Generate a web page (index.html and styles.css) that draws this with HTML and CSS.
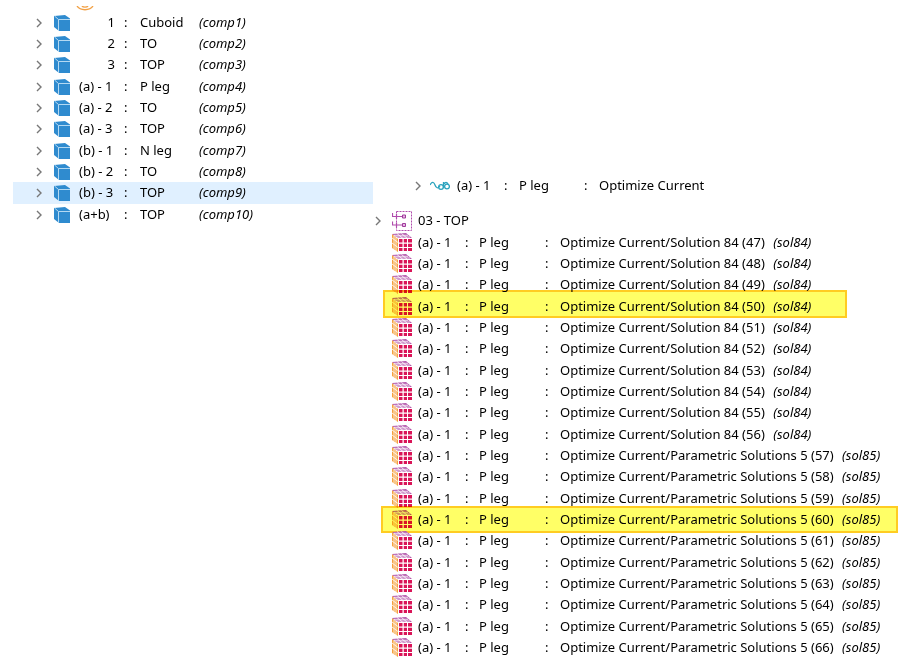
FILE: index.html
```
<!DOCTYPE html>
<html lang="en">
<head>
  <meta charset="UTF-8" />
  <meta name="viewport" content="width=device-width, initial-scale=1.0"/>
  <title>Model Tree</title>
  <link rel="stylesheet" href="styles.css">
</head>
<body>
  <svg class="symbols" aria-hidden="true">
    <symbol id="chevron" viewBox="0 0 8 10">
      <path d="M2 1l4 4-4 4" fill="none" stroke="#777" stroke-width="1.4"/>
    </symbol>
    <symbol id="cube" viewBox="0 0 16 16">
      <path d="M0 1l11-1 5 3.500V16H5L0 12z" fill="#2f8bcf"/>
      <path d="M.5 1L4.500 4.500H16M4.500 4.500V16" fill="none" stroke="#b4d9f2" stroke-width="1"/>
    </symbol>
    <symbol id="study" viewBox="0 0 20 10">
      <path d="M0 4c2-4 4-3 5 0s3 4 5 1M13.500 1v6M14 3c1-2 3-2 4 0" fill="none" stroke="#2ba3bd" stroke-width="1.3"/>
      <circle cx="11" cy="6" r="2.4" fill="none" stroke="#2ba3bd" stroke-width="1.3"/>
      <circle cx="17" cy="5.5" r="2.4" fill="none" stroke="#2ba3bd" stroke-width="1.3"/>
    </symbol>
    <symbol id="group" viewBox="0 0 20 20">
      <path d="M4.500.5h15v19h-15z" fill="none" stroke="#b04cac" stroke-dasharray="2 1"/>
      <path d="M.5 2v3.500H10M.5 10.500V14H10M4.500 3v5M4.500 11.500v5" fill="none" stroke="#b04cac" stroke-width="1.2"/>
      <path d="M10.500 4h3v3h-3zM10.500 12.500h3v3h-3z" fill="#e5b9e3" stroke="#a03c9c"/>
    </symbol>
    <symbol id="solution" viewBox="0 0 20 19">
      <path d="M0 1l6 5v13l-6-4z" fill="#f5a13c"/>
      <path d="M0 1l14-1 6 5H6z" fill="#b45aad"/>
      <path d="M2 2.500v14M4 4v14M0 5l6 4.500M0 10l6 4.500" fill="none" stroke="#fff" stroke-width=".8"/>
      <path d="M2 2.300h14M4 4h14M5 .5l6 5M9.500 .5l6 5" fill="none" stroke="#fff" stroke-width=".8"/>
      <path d="M6 5h14v14H6z" fill="#fff"/>
      <path d="M7 6h4v4H7zm4.500 0h4v4h-4zm4.500 0h4v4h-4zM7 10.500h4v4H7zm4.500 0h4v4h-4zm4.500 0h4v4h-4zM7 15h4v3H7zm4.500 0h4v3h-4zm4.500 0h4v3h-4z" fill="#d91458"/>
      <path d="M11 6v13M15.500 6v13M6 10h14M6 14.500h14" fill="none" stroke="#fff"/>
    </symbol>
  </svg>

  <main class="page">
    <section class="components">
      <svg class="parent-icon" viewBox="0 0 18 5" aria-hidden="true">
        <path d="M1 0c3 5 13 5 16 0M6 0c1 1.500 5 1.500 6 0" fill="none" stroke="#f2a145" stroke-width="1.400"/>
      </svg>
      <ul class="tree" id="components"></ul>
    </section>

    <section class="results">
      <div class="row study">
        <button class="toggle" aria-label="Expand study"><svg><use href="#chevron"/></svg></button>
        <svg class="study-icon"><use href="#study"/></svg>
        <span>(a) - 1</span><span>:</span><span>P leg</span><span>:</span><span>Optimize Current</span>
      </div>
      <div class="row group">
        <button class="toggle" aria-label="Expand group"><svg><use href="#chevron"/></svg></button>
        <svg class="group-icon"><use href="#group"/></svg>
        <span>03 - TOP</span>
      </div>
      <ul class="tree" id="solutions"></ul>
    </section>
  </main>

  <script>
    const components = [
      ['1', 'Cuboid'], ['2', 'TO'], ['3', 'TOP'],
      ['(a) - 1', 'P leg'], ['(a) - 2', 'TO'], ['(a) - 3', 'TOP'],
      ['(b) - 1', 'N leg'], ['(b) - 2', 'TO'], ['(b) - 3', 'TOP'],
      ['(a+b)', 'TOP']
    ];

    document.getElementById('components').innerHTML = components.map(([key, name], i) => `
      <li class="row component ${i === 8 ? 'selected' : ''}">
        <button class="toggle" aria-label="Expand comp${i + 1}"><svg><use href="#chevron"/></svg></button>
        <svg class="cube-icon"><use href="#cube"/></svg>
        <span class="${i < 3 ? 'number' : ''}">${key}</span><span>:</span><span>${name}</span>
        <em>(comp${i + 1})</em>
      </li>`).join('');

    let rows = '';
    for (let n = 47; n <= 66; n++) {
      const first = n <= 56;
      const title = first ? 'Solution 84' : 'Parametric Solutions 5';
      const mark = n === 50 ? 'marked' : n === 60 ? 'marked wide' : '';
      rows += `
      <li class="row solution ${mark}">
        <svg class="solution-icon"><use href="#solution"/></svg>
        <span>(a) - 1</span><span>:</span><span>P leg</span><span>:</span>
        <span>Optimize Current/${title} (${n}) <em>(${first ? 'sol84' : 'sol85'})</em></span>
      </li>`;
    }
    document.getElementById('solutions').innerHTML = rows;
  </script>
</body>
</html>
```
FILE: styles.css
```
body {
  margin: 0;
  background: #fff;
  color: #000;
  font-family: "Noto Sans", "Open Sans", sans-serif;
  font-size: 13px;
  line-height: 21px;
}

.symbols {
  position: absolute;
  width: 0;
  height: 0;
}

.page {
  display: grid;
  grid-template-columns: 360px 1fr;
  padding: 6px 0 0 13px;
}

.tree {
  list-style: none;
  margin: 0;
  padding: 0;
}

.row {
  display: grid;
  align-items: center;
  white-space: nowrap;
}

.tree .row:nth-child(3n) {
  padding-bottom: 1px;
}

.toggle {
  display: flex;
  width: 8px;
  padding: 0;
  border: none;
  background: none;
  cursor: pointer;
}

.toggle svg {
  width: 8px;
  height: 10px;
}

/* components */
.parent-icon {
  display: block;
  width: 18px;
  height: 5px;
  margin: 0 0 1px 63px;
}

.component {
  grid-template-columns: 19px 25px 36px 16px 68px 1fr;
  padding-left: 22px;
}

.component .number {
  text-align: right;
}

.component span:nth-of-type(2),
.component span:nth-of-type(3) {
  padding-left: 9px;
}

.selected {
  background: #e0f0ff;
}

.cube-icon {
  width: 16px;
  height: 16px;
  margin-top: 1px;
}

/* study and solutions */
.results {
  padding-top: 169px;
}

.study {
  grid-template-columns: 16px 27px 47px 15px 65px 15px 1fr;
  padding-left: 41px;
}

.study-icon {
  width: 20px;
  height: 10px;
}

.group {
  grid-template-columns: 18px 26px 1fr;
  padding: 14px 0 1px 1px;
}

.group-icon {
  width: 20px;
  height: 20px;
}

.solution {
  position: relative;
  grid-template-columns: 26px 47px 14px 66px 15px 1fr;
  padding-left: 19px;
}

.solution em {
  margin-left: 5px;
}

.solution-icon {
  width: 20px;
  height: 19px;
}

.marked::after {
  content: "";
  position: absolute;
  top: -6px;
  bottom: -1px;
  left: 10px;
  width: 460px;
  border: 2px solid #ffcc22;
  background: #ffff66;
  mix-blend-mode: multiply;
}

.wide::after {
  top: -3px;
  bottom: -3px;
  left: 8px;
  width: 513px;
}
```
